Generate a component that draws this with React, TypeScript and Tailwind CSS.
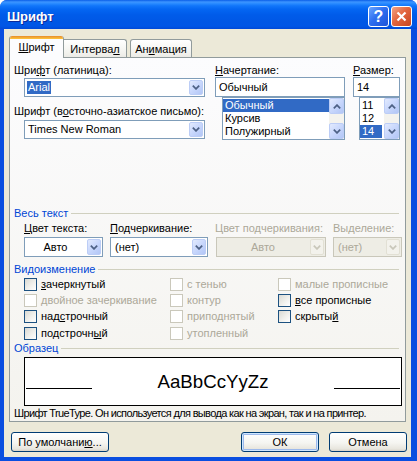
import React from "react";

const U = ({ children }: { children: React.ReactNode }) => (
  <span className="underline decoration-1 underline-offset-1">{children}</span>
);

function Chev({ up = false, color = "#4d6185" }: { up?: boolean; color?: string }) {
  return (
    <svg width="8" height="5" viewBox="0 0 8 5" className="block">
      <path
        d={up ? "M0.8 4.3 L4 1.1 L7.2 4.3" : "M0.8 0.7 L4 3.9 L7.2 0.7"}
        fill="none"
        stroke={color}
        strokeWidth="1.7"
      />
    </svg>
  );
}

function DropBtn({ disabled }: { disabled?: boolean }) {
  return disabled ? (
    <div className="m-px w-[14px] shrink-0 rounded-[2px] border border-[#e2e0d4] bg-[#f3f2ec] flex items-center justify-center">
      <Chev color="#c9c7ba" />
    </div>
  ) : (
    <div className="m-px w-[14px] shrink-0 rounded-[2px] border border-[#bccdf6] bg-[linear-gradient(135deg,#e2eafe_0%,#c8d7fc_50%,#b2c6f6_100%)] flex items-center justify-center">
      <Chev />
    </div>
  );
}

function Combo({
  className,
  children,
  disabled,
  center,
}: {
  className: string;
  children: React.ReactNode;
  disabled?: boolean;
  center?: boolean;
}) {
  return (
    <div
      className={`flex shrink-0 border ${
        disabled ? "border-[#c9c7ba] bg-[#eeede5] text-[#aca899]" : "border-[#7f9db9] bg-white"
      } ${className}`}
    >
      <div className={`flex-1 flex items-center min-w-0 whitespace-nowrap ${center ? "justify-center" : "pl-[2px]"}`}>
        {children}
      </div>
      <DropBtn disabled={disabled} />
    </div>
  );
}

function ScrollBtn({ up }: { up?: boolean }) {
  return (
    <div className="h-[16px] shrink-0 rounded-[2px] border border-[#bccdf6] bg-[linear-gradient(135deg,#e2eafe_0%,#c8d7fc_50%,#b2c6f6_100%)] flex items-center justify-center">
      <Chev up={up} />
    </div>
  );
}

function ListBox({
  items,
  selected,
  className,
  selClass,
}: {
  items: string[];
  selected: number;
  className: string;
  selClass: string;
}) {
  return (
    <div className={`flex shrink-0 border border-[#7f9db9] bg-white ${className}`}>
      <div className="flex-1 flex flex-col pt-px min-w-0">
        {items.map((it, i) => (
          <div
            key={it}
            className={`h-[13px] leading-[13px] whitespace-nowrap pl-[2px] ${
              i === selected ? `bg-[#316ac5] text-white ${selClass}` : ""
            }`}
          >
            {it}
          </div>
        ))}
      </div>
      <div className="w-[15px] shrink-0 flex flex-col bg-[#f4f3ee]">
        <ScrollBtn up />
        <div className="flex-1" />
        <ScrollBtn />
      </div>
    </div>
  );
}

function GroupHeader({ children }: { children: React.ReactNode }) {
  return (
    <div className="flex items-center h-[13px]">
      <span className="text-[#0046d5] whitespace-nowrap">{children}</span>
      <div className="flex-1 h-px bg-[#d0d0bf] ml-[3px]" />
    </div>
  );
}

function Check({ label, disabled }: { label: React.ReactNode; disabled?: boolean }) {
  return (
    <div className="flex items-center">
      <div
        className={`w-[13px] h-[13px] shrink-0 border ${
          disabled
            ? "border-[#cac8bb] bg-white"
            : "border-[#1c5180] bg-[linear-gradient(135deg,#d9d9d3_0%,#f0f0ec_55%,#ffffff_100%)]"
        }`}
      />
      <span className={`ml-[4px] whitespace-nowrap ${disabled ? "text-[#aca899]" : ""}`}>{label}</span>
    </div>
  );
}

function Btn({
  className,
  children,
  def,
}: {
  className: string;
  children: React.ReactNode;
  def?: boolean;
}) {
  return (
    <div
      className={`h-[20px] shrink-0 flex items-center justify-center rounded-[3px] border border-[#003c74] bg-[linear-gradient(to_bottom,#ffffff_0%,#f5f5f1_55%,#e8e6de_88%,#d8d3c8_100%)] ${
        def ? "shadow-[inset_0_0_0_1px_#cee7ff,inset_0_0_0_2px_#9db9eb]" : ""
      } ${className}`}
    >
      {children}
    </div>
  );
}

export default function App() {
  return (
    <div className="w-[417px] h-[461px] flex flex-col bg-[#0a4ee0] font-['Liberation_Sans',Tahoma,sans-serif] text-[11px] leading-[13px] text-black overflow-hidden rounded-t-[7px]">
      {/* Title bar */}
      <div className="h-[29px] shrink-0 flex items-center pt-[4px] pl-[7px] pr-[5px] bg-[linear-gradient(to_bottom,#0a5ee8_0%,#3d95ff_7%,#2a8bff_12%,#1176fa_20%,#0466f2_32%,#005cea_50%,#0057e5_75%,#0056e6_90%,#0049d8_100%)]">
        <span className="text-white font-bold text-[13px] leading-[15px] [text-shadow:1px_1px_0_#0b2a9a]">Шрифт</span>
        <div className="ml-auto flex gap-[2px]">
          <div className="w-[21px] h-[21px] rounded-[3px] border border-white bg-[linear-gradient(135deg,#6aa6ff_0%,#2f6ff0_45%,#1c52d8_100%)] flex items-center justify-center text-white font-bold text-[16px] leading-none">
            ?
          </div>
          <div className="w-[21px] h-[21px] rounded-[3px] border border-white bg-[linear-gradient(135deg,#f2a486_0%,#e3663f_45%,#c84520_100%)] flex items-center justify-center">
            <svg width="11" height="11" viewBox="0 0 11 11">
              <path d="M1.5 1.5 L9.5 9.5 M9.5 1.5 L1.5 9.5" stroke="white" strokeWidth="2.2" />
            </svg>
          </div>
        </div>
      </div>

      {/* Body */}
      <div className="flex-1 ml-[4px] mr-[6px] mb-[4px] bg-[#ece9d8] flex flex-col">
        {/* Tabs */}
        <div className="mt-[7px] ml-[5px] h-[21px] flex items-end relative z-10">
          <div className="w-[55px] h-[22px] -mb-px flex flex-col border-x border-[#919b9c] bg-[#fcfcfe] rounded-t-[3px] overflow-hidden">
            <div className="h-[3px] shrink-0 bg-[linear-gradient(to_bottom,#e68b2c,#ffc73c)]" />
            <div className="flex-1 flex items-center justify-center pb-[2px]">
              <span>
                <U>Ш</U>рифт
              </span>
            </div>
          </div>
          <div className="w-[63px] h-[18px] flex items-center justify-center pt-[2px] border-t border-r border-[#919b9c] rounded-tr-[3px] bg-[linear-gradient(to_bottom,#ffffff,#f3f3ef_70%,#ecebe6)]">
            <span>
              Интерва<U>л</U>
            </span>
          </div>
          <div className="ml-[3px] w-[62px] h-[18px] flex items-center justify-center pt-[2px] border-t border-x border-[#919b9c] rounded-t-[3px] bg-[linear-gradient(to_bottom,#ffffff,#f3f3ef_70%,#ecebe6)]">
            <span>
              Ан<U>и</U>мация
            </span>
          </div>
        </div>

        {/* Panel */}
        <div className="ml-[5px] w-[397px] h-[365px] shrink-0 border border-[#919b9c] bg-[linear-gradient(to_bottom,#fcfcfe,#f4f3ee)] flex flex-col pt-[6px] pl-[4px] pr-[6px]">
          {/* Section 1 */}
          <div className="flex h-[76px]">
            <div className="w-[191px] shrink-0 flex flex-col">
              <div className="whitespace-nowrap">
                Шри<U>ф</U>т (латиница):
              </div>
              <Combo className="mt-px ml-[10px] w-[181px] h-[19px]">
                <span className="bg-[#316ac5] text-white px-px leading-[13px]">Arial</span>
              </Combo>
              <div className="mt-[8px] whitespace-nowrap">
                Шрифт (в<U>о</U>сточно-азиатское письмо):
              </div>
              <Combo className="mt-[2px] ml-[10px] w-[181px] h-[19px]">
                <span className="pl-px">Times New Roman</span>
              </Combo>
            </div>
            <div className="ml-[10px] w-[130px] shrink-0 flex flex-col">
              <div>
                <U>Н</U>ачертание:
              </div>
              <div className="h-[20px] border border-[#7f9db9] bg-white flex items-center pl-[3px]">Обычный</div>
              <ListBox
                className="ml-[7px] w-[123px] h-[43px]"
                items={["Обычный", "Курсив", "Полужирный"]}
                selected={0}
                selClass=""
              />
            </div>
            <div className="ml-[8px] w-[47px] shrink-0 flex flex-col">
              <div>
                <U>Р</U>азмер:
              </div>
              <div className="h-[20px] border border-[#7f9db9] bg-white flex items-center pl-[3px]">14</div>
              <ListBox
                className="ml-[6px] w-[41px] h-[43px]"
                items={["11", "12", "14"]}
                selected={2}
                selClass="mr-[2px]"
              />
            </div>
          </div>

          {/* Весь текст */}
          <div className="mt-[67px]">
            <GroupHeader>Весь текст</GroupHeader>
          </div>
          <div className="mt-[2px] flex pl-[10px]">
            <div className="w-[79px] shrink-0 flex flex-col">
              <div className="whitespace-nowrap">
                <U>Ц</U>вет текста:
              </div>
              <Combo className="mt-[2px] w-[79px] h-[20px]" center>
                Авто
              </Combo>
            </div>
            <div className="ml-[7px] w-[98px] shrink-0 flex flex-col">
              <div className="whitespace-nowrap">
                <U>П</U>одчеркивание:
              </div>
              <Combo className="mt-[2px] w-[98px] h-[20px]">
                <span className="pl-[2px]">(нет)</span>
              </Combo>
            </div>
            <div className="ml-[8px] w-[110px] shrink-0 flex flex-col">
              <div className="whitespace-nowrap text-[#aca899] -ml-px">Цвет подчеркивания:</div>
              <Combo className="mt-[2px] w-[110px] h-[20px]" center disabled>
                Авто
              </Combo>
            </div>
            <div className="ml-[7px] w-[69px] shrink-0 flex flex-col">
              <div className="whitespace-nowrap text-[#aca899]">Выделение:</div>
              <Combo className="mt-[2px] w-[69px] h-[20px]" disabled>
                <span className="pl-[2px]">(нет)</span>
              </Combo>
            </div>
          </div>

          {/* Видоизменение */}
          <div className="mt-[6px]">
            <GroupHeader>Видоизменение</GroupHeader>
          </div>
          <div className="pl-[10px] grid grid-cols-[146px_108px_1fr] grid-rows-[16px_16px_17px_16px]">
            <Check label={<><U>з</U>ачеркнутый</>} />
            <Check label="с тенью" disabled />
            <Check label="малые прописные" disabled />
            <Check label="двойное зачеркивание" disabled />
            <Check label="контур" disabled />
            <Check label={<><U>в</U>се прописные</>} />
            <Check label={<>над<U>с</U>трочный</>} />
            <Check label="приподнятый" disabled />
            <Check label={<>скрыты<U>й</U></>} />
            <Check label={<>подстрочн<U>ы</U>й</>} />
            <Check label="утопленный" disabled />
            <div />
          </div>

          {/* Образец */}
          <div className="mt-px">
            <GroupHeader>Образец</GroupHeader>
          </div>
          <div className="mt-[2px] ml-[10px] w-[378px] h-[49px] shrink-0 border border-black bg-white flex justify-between">
            <div className="ml-px mt-[30px] w-[66px] h-px bg-black" />
            <div className="mt-[13px] text-[18.67px] leading-[22px] font-['Liberation_Sans',Arial,sans-serif]">
              AaBbCcYyZz
            </div>
            <div className="mr-px mt-[30px] w-[66px] h-px bg-black" />
          </div>
          <div className="mt-px whitespace-nowrap tracking-[-0.65px]">
            Шрифт TrueType. Он используется для вывода как на экран, так и на принтер.
          </div>
        </div>

        {/* Buttons */}
        <div className="mt-[10px] flex pl-[7px] pr-[4px]">
          <Btn className="w-[98px]">
            <span>
              По умолчани<U>ю</U>...
            </span>
          </Btn>
          <Btn className="ml-auto w-[78px]" def>
            ОК
          </Btn>
          <Btn className="ml-[10px] w-[78px]">Отмена</Btn>
        </div>
      </div>
    </div>
  );
}
